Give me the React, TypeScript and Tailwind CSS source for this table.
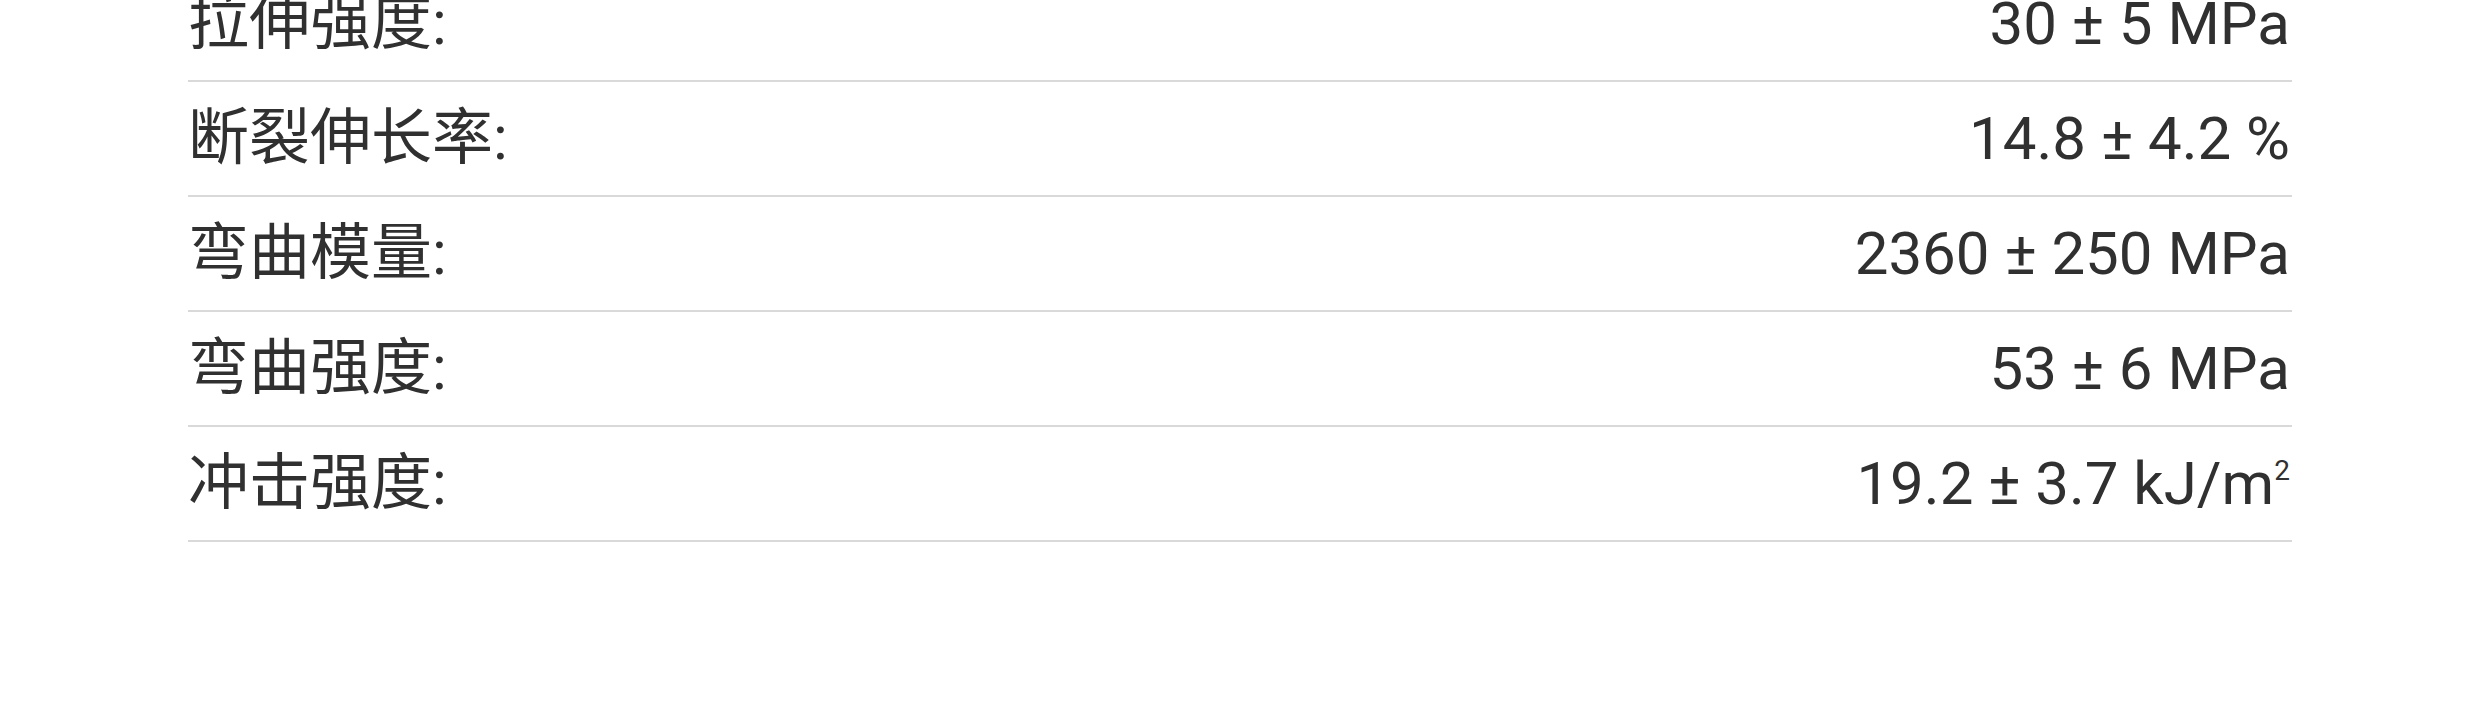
import React from "react";

const rows: [string, React.ReactNode][] = [
  ["拉伸强度:", "30 ± 5 MPa"],
  ["断裂伸长率:", "14.8 ± 4.2 %"],
  ["弯曲模量:", "2360 ± 250 MPa"],
  ["弯曲强度:", "53 ± 6 MPa"],
  [
    "冲击强度:",
    <>
      19.2 ± 3.7 kJ/m
      <span className="relative -top-[24px] text-[28px] leading-none">2</span>
    </>,
  ],
];

export default function App() {
  return (
    <div
      className="w-[2480px] h-[708px] overflow-hidden bg-white px-[188px]"
      style={{ fontFamily: 'Roboto, "Noto Sans CJK SC", sans-serif' }}
    >
      <div className="-mt-[33px] flex flex-col">
        {rows.map(([k, v], i) => (
          <div
            key={i}
            className="flex h-[115px] items-center justify-between border-b-2 border-[#d9d9d9] leading-none text-[#303030]"
          >
            <span className="text-[61px]">{k}</span>
            <span className="pr-[2px] text-[60px]">{v}</span>
          </div>
        ))}
      </div>
    </div>
  );
}
